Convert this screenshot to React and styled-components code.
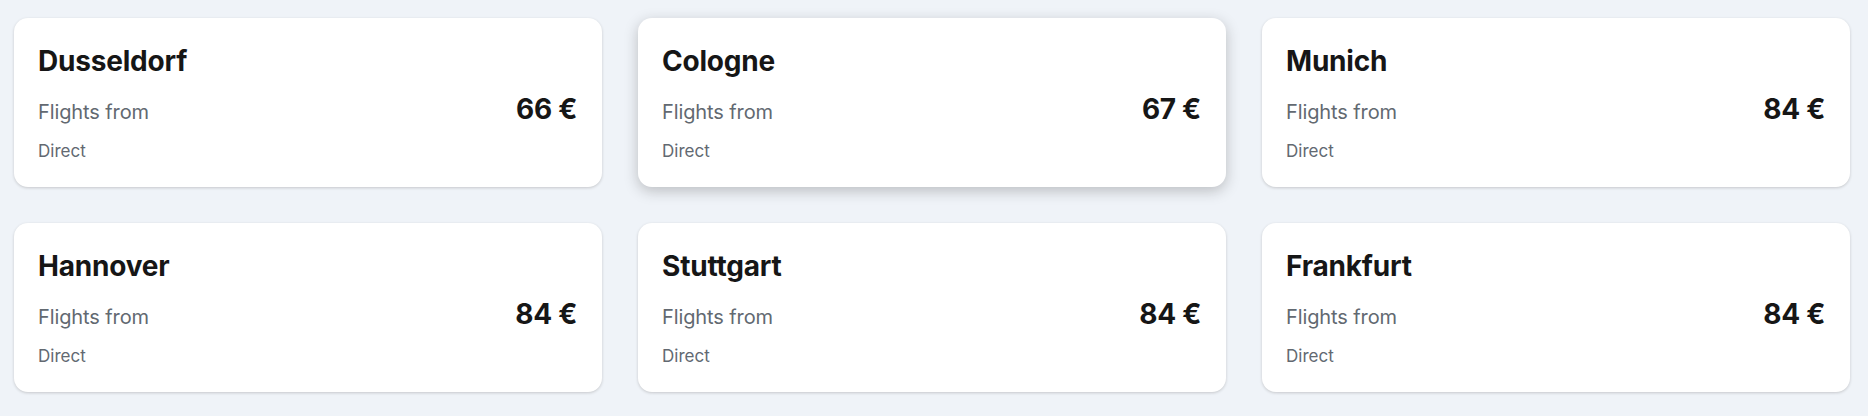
import React from "react";
import styled, { createGlobalStyle } from "styled-components";

const Global = createGlobalStyle`
  html, body { margin: 0; padding: 0; background: #eff3f8; }
  body { font-family: Inter, "Noto Sans", sans-serif; color: #161616; }
`;

const Grid = styled.div`
  display: grid;
  grid-template-columns: repeat(3, 588px);
  column-gap: 36px;
  row-gap: 36px;
  padding: 18px 18px 24px 14px;
`;

const Card = styled.a`
  display: flex;
  flex-direction: column;
  background: #ffffff;
  border-radius: 14px;
  padding: 25px 25px 24px 24px;
  text-decoration: none;
  color: inherit;
  box-shadow: ${(p) =>
    p.$hover
      ? "0 4px 14px 0 rgba(37, 32, 31, 0.25)"
      : "0 1px 3px 0 rgba(37, 32, 31, 0.2)"};
`;

const Title = styled.h3`
  margin: 0;
  font-size: 28px;
  line-height: 36px;
  font-weight: 700;
  letter-spacing: -0.2px;
  color: #161616;
`;

const PriceRow = styled.div`
  display: flex;
  align-items: baseline;
  justify-content: space-between;
  margin-top: 12px;
`;

const Label = styled.span`
  font-size: 20px;
  line-height: 36px;
  color: #626971;
  letter-spacing: -0.1px;
`;

const Price = styled.span`
  font-size: 28px;
  line-height: 36px;
  font-weight: 700;
  color: #161616;
  letter-spacing: -0.3px;
`;

const Stops = styled.span`
  margin-top: 9px;
  font-size: 17px;
  line-height: 24px;
  color: #626971;
`;

const destinations = [
  { city: "Dusseldorf", price: "66 €" },
  { city: "Cologne", price: "67 €", hover: true },
  { city: "Munich", price: "84 €" },
  { city: "Hannover", price: "84 €" },
  { city: "Stuttgart", price: "84 €" },
  { city: "Frankfurt", price: "84 €" },
];

export default function App() {
  return (
    <>
      <Global />
      <Grid>
        {destinations.map((d) => (
          <Card key={d.city} $hover={d.hover}>
            <Title>{d.city}</Title>
            <PriceRow>
              <Label>Flights from</Label>
              <Price>{d.price}</Price>
            </PriceRow>
            <Stops>Direct</Stops>
          </Card>
        ))}
      </Grid>
    </>
  );
}
